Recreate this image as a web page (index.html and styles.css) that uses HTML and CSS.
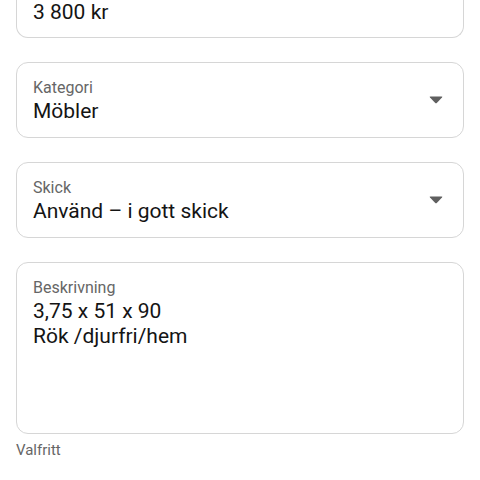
FILE: index.html
```html
<!DOCTYPE html>
<html lang="sv">
<head>
    <meta charset="UTF-8">
    <meta name="viewport" content="width=device-width, initial-scale=1.0">
    <title>Annons</title>
    <link rel="stylesheet" href="styles.css">
</head>
<body>
    <div class="form">
        <div class="field field-price">
            <div class="field-body">
                <div class="value">3 800 kr</div>
            </div>
        </div>

        <div class="field">
            <div class="field-body">
                <div class="label">Kategori</div>
                <div class="value">Möbler</div>
            </div>
            <svg class="arrow" width="14" height="8" viewBox="0 0 14 8">
                <path d="M1.5 0.5 H12.5 Q14 0.5 13 1.6 L8 6.8 Q7 7.8 6 6.8 L1 1.6 Q0 0.5 1.5 0.5 Z" fill="#5f5f5f"/>
            </svg>
        </div>

        <div class="field">
            <div class="field-body">
                <div class="label">Skick</div>
                <div class="value">Använd – i gott skick</div>
            </div>
            <svg class="arrow" width="14" height="8" viewBox="0 0 14 8">
                <path d="M1.5 0.5 H12.5 Q14 0.5 13 1.6 L8 6.8 Q7 7.8 6 6.8 L1 1.6 Q0 0.5 1.5 0.5 Z" fill="#5f5f5f"/>
            </svg>
        </div>

        <div class="field field-text">
            <div class="field-body">
                <div class="label">Beskrivning</div>
                <div class="value">3,75 x 51 x 90<br>Rök /djurfri/hem</div>
            </div>
        </div>
        <div class="helper">Valfritt</div>
    </div>
</body>
</html>
```

FILE: styles.css
```css
body {
    margin: 0;
    background: #fff;
    font-family: Roboto, "Liberation Sans", sans-serif;
    color: #1a1a1a;
}
.form {
    padding: 0 16px;
}
.field {
    display: flex;
    align-items: center;
    height: 76px;
    box-sizing: border-box;
    border: 1px solid #d6d6d6;
    border-radius: 12px;
    padding: 0 20px 0 16px;
    margin-bottom: 24px;
}
.field-body {
    flex: 1;
    align-self: flex-start;
    padding-top: 14px;
}
.field-price {
    height: 38px;
    border-top: none;
    border-radius: 0 0 12px 12px;
}
.field-price .field-body {
    padding-top: 0;
}
.label {
    font-size: 16px;
    line-height: 22px;
    color: #666;
}
.value {
    font-size: 21px;
    line-height: 25px;
    color: #141414;
}
.arrow {
    display: block;
}
.field-text {
    height: 172px;
    margin-bottom: 6px;
}
.helper {
    font-size: 15px;
    line-height: 20px;
    color: #666;
}
```
